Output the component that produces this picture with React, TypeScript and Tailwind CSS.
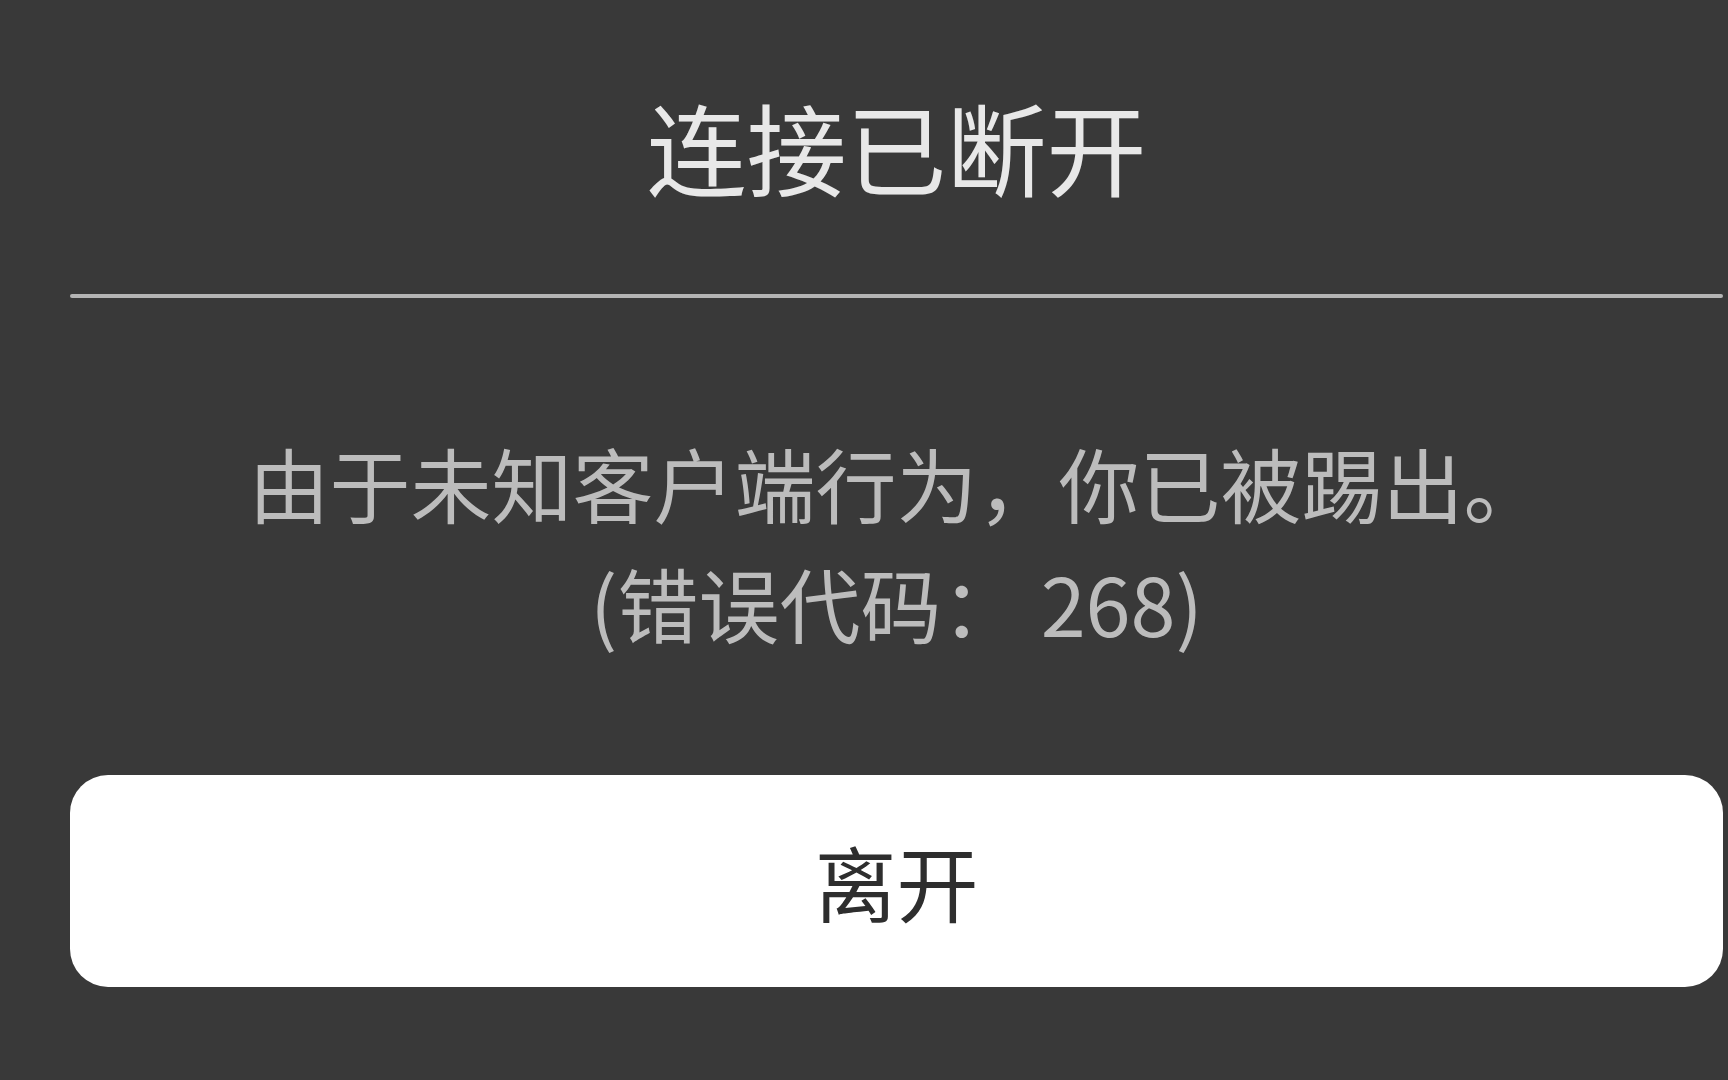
export default function App() {
  return (
    <div
      className="h-screen w-full overflow-hidden bg-[#393939] pl-[70px] pr-[5px]"
      style={{ fontFamily: '"Noto Sans CJK SC", "Noto Sans", sans-serif' }}
    >
      <div className="flex flex-col items-stretch">
        <h1 className="mt-[96px] text-center text-[100px] leading-[100px] font-normal text-[#e8e8e8]">
          连接已断开
        </h1>

        <div className="mt-[98px] h-[4px] rounded-full bg-[#b4b4b4]" />

        <p className="mt-[124px] text-center text-[81px] leading-[120px] text-[#bcbcbc]">
          由于未知客户端行为，你已被踢出。
          <br />
          (错误代码： 268)
        </p>

        <button className="mt-[113px] flex h-[212px] items-center justify-center rounded-[38px] bg-white text-[82px] leading-none text-[#2e2e2e]">
          离开
        </button>
      </div>
    </div>
  );
}
